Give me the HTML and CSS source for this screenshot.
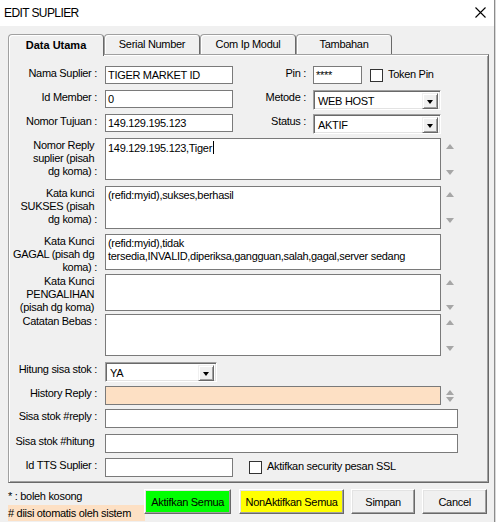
FILE: index.html
```html
<!doctype html>
<html lang="id">
<head>
    <meta charset="utf-8">
    <title>Edit Suplier</title>
    <link rel="stylesheet" href="styles.css">
</head>

<body>
    <div class="window">
        <div class="titlebar">
            <span class="title">EDIT SUPLIER</span>
            <svg class="close" width="11" height="11" viewBox="0 0 11 11">
                <path d="M0.5 0.5 L10.5 10.5 M10.5 0.5 L0.5 10.5" stroke="#000" stroke-width="1.1" fill="none" />
            </svg>
        </div>

        <div class="client">
            <div class="tabs">
                <div class="tab active">Data Utama</div>
                <div class="tab">Serial Number</div>
                <div class="tab">Com Ip Modul</div>
                <div class="tab">Tambahan</div>
            </div>

            <div class="panel">
                <div class="row h24">
                    <div class="lbl">Nama Suplier :</div>
                    <div class="field short">TIGER MARKET ID</div>
                    <div class="lbl-right">Pin :</div>
                    <div class="field pin">****</div>
                    <span class="check"></span>
                    <span class="check-text">Token Pin</span>
                </div>

                <div class="row h24">
                    <div class="lbl">Id Member :</div>
                    <div class="field short">0</div>
                    <div class="lbl-right">Metode :</div>
                    <div class="combo wide">
                        <span class="combo-text">WEB HOST</span>
                        <span class="drop"><i></i></span>
                    </div>
                </div>

                <div class="row h24">
                    <div class="lbl">Nomor Tujuan :</div>
                    <div class="field short">149.129.195.123</div>
                    <div class="lbl-right">Status :</div>
                    <div class="combo wide">
                        <span class="combo-text">AKTIF</span>
                        <span class="drop"><i></i></span>
                    </div>
                </div>

                <div class="row h48">
                    <div class="lbl">Nomor Reply&nbsp;<br>suplier (pisah&nbsp;<br>dg koma) :</div>
                    <div class="memo m42">149.129.195.123,Tiger<span class="caret"></span></div>
                    <div class="spin"><i class="up"></i><i class="down"></i></div>
                </div>

                <div class="row h48">
                    <div class="lbl">Kata kunci&nbsp;<br>SUKSES (pisah&nbsp;<br>dg koma) :</div>
                    <div class="memo m43">(refid:myid),sukses,berhasil</div>
                    <div class="spin"><i class="up"></i><i class="down"></i></div>
                </div>

                <div class="row h40">
                    <div class="lbl">Kata Kunci&nbsp;<br>GAGAL (pisah dg&nbsp;<br>koma) :</div>
                    <div class="memo m36">(refid:myid),tidak tersedia,INVALID,diperiksa,gangguan,salah,gagal,server sedang</div>
                </div>

                <div class="row h40">
                    <div class="lbl">Kata Kunci&nbsp;<br>PENGALIHAN&nbsp;<br>(pisah dg koma)&nbsp;</div>
                    <div class="memo m37"></div>
                    <div class="spin"><i class="up"></i><i class="down"></i></div>
                </div>

                <div class="row h48">
                    <div class="lbl">Catatan Bebas :</div>
                    <div class="memo m42"></div>
                    <div class="spin"><i class="up"></i><i class="down"></i></div>
                </div>

                <div class="row h24">
                    <div class="lbl">Hitung sisa stok :</div>
                    <div class="combo small">
                        <span class="combo-text">YA</span>
                        <span class="drop"><i></i></span>
                    </div>
                </div>

                <div class="row h23">
                    <div class="lbl">History Reply :</div>
                    <div class="memo history"></div>
                    <div class="spin tight"><i class="up"></i><i class="down"></i></div>
                </div>

                <div class="row h25">
                    <div class="lbl">Sisa stok #reply :</div>
                    <div class="field long"></div>
                </div>

                <div class="row h24">
                    <div class="lbl">Sisa stok #hitung&nbsp;</div>
                    <div class="field long"></div>
                </div>

                <div class="row">
                    <div class="lbl">Id TTS Suplier :</div>
                    <div class="field short tall"></div>
                    <span class="check ssl"></span>
                    <span class="check-text">Aktifkan security pesan SSL</span>
                </div>
            </div>

            <div class="footer">
                <div class="notes">
                    <div class="note">* : boleh kosong</div>
                    <div class="note auto">#&nbsp;diisi otomatis oleh sistem</div>
                </div>
                <button class="btn green">Aktifkan Semua</button>
                <button class="btn yellow">NonAktifkan Semua</button>
                <button class="btn plain">Simpan</button>
                <button class="btn plain">Cancel</button>
            </div>
        </div>
    </div>
</body>
</html>
```

FILE: styles.css
```css
* {
  box-sizing: border-box;
}

body {
  margin: 0;
  width: 496px;
  height: 522px;
  overflow: hidden;
  background: #d8d8d8;
  font-family: 'Liberation Sans', Arial, sans-serif;
  font-size: 11px;
  letter-spacing: -0.3px;
  color: #000;
}

.window {
  width: 495px;
  height: 522px;
  background: #f0f0f0;
  border-right: 1px solid #8c8c8c;
}

/* title bar */
.titlebar {
  height: 26px;
  background: #fff;
  display: flex;
  align-items: center;
  justify-content: space-between;
  padding: 0 8px 1px 4px;
}

.title {
  font-size: 12px;
  letter-spacing: -0.6px;
}

.close {
  display: block;
  margin-top: -1px;
}

/* client area */
.client {
  padding: 8px 0 0 8px;
}

.tabs {
  display: flex;
  height: 20px;
  align-items: flex-end;
}

.tab {
  width: 96px;
  height: 20px;
  background: #f0f0f0;
  border: 1px solid #a0a0a0;
  border-right-color: #696969;
  border-bottom: none;
  border-radius: 4px 4px 0 0;
  box-shadow: inset 1px 1px 0 #fff;
  text-align: center;
  line-height: 18px;
}

.tab.active {
  height: 22px;
  margin-bottom: -2px;
  position: relative;
  z-index: 1;
  font-weight: bold;
  letter-spacing: 0;
  line-height: 19px;
  padding-top: 1px;
}

.panel {
  width: 481px;
  height: 429px;
  border: 1px solid;
  border-color: #a0a0a0 #696969 #696969 #a0a0a0;
  box-shadow: inset 1px 1px 0 #fff, inset -1px -1px 0 #a0a0a0;
  padding: 11px 0 0 1px;
}

/* form rows */
.row {
  display: flex;
  align-items: flex-start;
}

.h23 { height: 23px; }
.h24 { height: 24px; }
.h25 { height: 25px; }
.h40 { height: 40px; }
.h48 { height: 48px; }

.lbl {
  width: 87px;
  margin-right: 8px;
  padding-top: 1px;
  text-align: right;
  line-height: 13px;
  white-space: nowrap;
}

.lbl-right {
  width: 73px;
  margin-right: 7px;
  padding-top: 1px;
  text-align: right;
  line-height: 13px;
}

.field {
  height: 18px;
  background: #fff;
  border: 1px solid #7a7a7a;
  padding: 2px 2px 0;
  line-height: 13px;
  white-space: nowrap;
  overflow: hidden;
}

.field.short { width: 128px; }
.field.pin { width: 49px; }
.field.long { width: 353px; height: 19px; }
.field.tall { height: 19px; }

.memo {
  width: 336px;
  background: #fff;
  border: 1px solid #7a7a7a;
  padding: 2px 1px 0 2px;
  line-height: 13px;
  overflow: hidden;
}

.m36 { height: 36px; }
.m37 { height: 37px; }
.m42 { height: 42px; }
.m43 { height: 43px; }

.memo.history {
  height: 19px;
  background: #fde0c4;
}

.caret {
  display: inline-block;
  width: 1px;
  height: 13px;
  margin-left: 1px;
  vertical-align: -2px;
  background: #000;
}

/* little scroll arrows next to memo fields */
.spin {
  width: 8px;
  height: 100%;
  margin-left: 5px;
  padding: 6px 0 11px;
  display: flex;
  flex-direction: column;
  justify-content: space-between;
}

.row.h48 .spin { padding-bottom: 11px; }
.row.h40 .spin { padding-bottom: 4px; }

.spin.tight {
  padding: 4px 0 3px;
  height: 19px;
  justify-content: space-between;
}

.spin i {
  display: block;
  width: 0;
  height: 0;
  border-left: 4px solid transparent;
  border-right: 4px solid transparent;
}

.spin .up { border-bottom: 5px solid #a6a6a6; }
.spin .down { border-top: 5px solid #a6a6a6; }

/* combo boxes */
.combo {
  height: 20px;
  display: flex;
  background: #fff;
  border: 1px solid;
  border-color: #a0a0a0 #fff #fff #a0a0a0;
  box-shadow: inset 1px 1px 0 #696969, inset -1px -1px 0 #e3e3e3;
  padding: 1px;
}

.combo.wide { width: 128px; }
.combo.small { width: 112px; }

.combo-text {
  flex: 1;
  padding: 3px 0 0 3px;
  line-height: 13px;
}

.drop {
  width: 16px;
  height: 16px;
  margin: 1px 1px 0 0;
  background: #f0f0f0;
  border: 1px solid;
  border-color: #f0f0f0 #696969 #696969 #f0f0f0;
  box-shadow: inset 1px 1px 0 #fff, inset -1px -1px 0 #a0a0a0;
  display: flex;
  align-items: center;
  justify-content: center;
}

.drop i {
  display: block;
  width: 0;
  height: 0;
  margin-top: 1px;
  border-left: 3.5px solid transparent;
  border-right: 3.5px solid transparent;
  border-top: 4px solid #000;
}

/* check boxes */
.check {
  width: 13px;
  height: 13px;
  margin: 3px 5px 0 8px;
  background: #fff;
  border: 1px solid #333;
}

.check.ssl {
  margin-left: 16px;
}

.check-text {
  padding-top: 2px;
  line-height: 13px;
}

/* footer */
.footer {
  display: flex;
  align-items: flex-start;
  padding-top: 6px;
}

.notes {
  width: 136px;
  margin-top: 1px;
}

.note {
  height: 15px;
  line-height: 13px;
}

.note.auto {
  width: 137px;
  height: 16px;
  line-height: 16px;
  background: #fde0c4;
}

.btn {
  height: 25px;
  margin-right: 7px;
  padding: 0;
  font-family: inherit;
  font-size: 11px;
  letter-spacing: -0.3px;
  color: #000;
  border: 1px solid;
  border-color: #fff #696969 #696969 #fff;
  box-shadow: inset -1px -1px 0 #a0a0a0, inset 1px 1px 0 #e3e3e3;
  border-radius: 0;
}

.btn.green {
  width: 88px;
  margin-left: 0;
  margin-right: 8px;
  background: #00ff00;
}

.btn.yellow {
  width: 105px;
  background: #ffff00;
}

.btn.plain {
  width: 65px;
  background: #f0f0f0;
}
```
